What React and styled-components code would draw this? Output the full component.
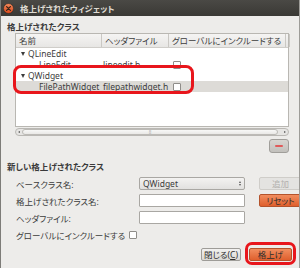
import React from 'react';
import styled, { createGlobalStyle } from 'styled-components';

const Global = createGlobalStyle`
  html, body { margin: 0; padding: 0; background: #edecea; }
  body {
    font-family: "Noto Sans", "Noto Sans CJK JP", sans-serif;
    font-feature-settings: "palt";
    font-size: 8.5px;
    color: #3c3c3c;
  }
`;

const Window = styled.div`
  width: 300px;
  height: 268px;
  box-sizing: border-box;
  border-left: 1px solid #7d7c78;
  border-right: 1px solid #9d9c98;
  background: #edecea;
  display: flex;
  flex-direction: column;
  overflow: hidden;
`;

const TitleBar = styled.div`
  height: 16px;
  flex: none;
  display: flex;
  align-items: center;
  gap: 6px;
  padding-left: 3px;
  background: linear-gradient(#4a4945, #3a3935);
  color: #dfdbd2;
  font-weight: bold;
  font-size: 8.5px;
  margin-left: -1px;
  margin-right: -1px;
`;

const Body = styled.div`
  display: flex;
  flex-direction: column;
`;

const SectionTitle = styled.div`
  font-weight: bold;
  height: 12px;
  line-height: 12px;
  margin: ${p => p.$top}px 0 0 6px;
  color: #3a3a3a;
`;

const TreeFrame = styled.div`
  position: relative;
  margin: 0 0 0 14px;
  width: 274px;
  height: 94px;
  box-sizing: border-box;
  border: 1px solid #b9b7b2;
  background: #fff;
`;

const Header = styled.div`
  display: grid;
  grid-template-columns: 86px 67px 117px 1fr;
  height: 13px;
  background: linear-gradient(#f5f4f3, #e7e6e4);
  border-bottom: 1px solid #cfcdc9;
`;

const HeadCell = styled.div`
  padding-left: 3px;
  line-height: 13px;
  white-space: nowrap;
  overflow: hidden;
  border-right: 1px solid #cac8c4;
  color: #3c3c3c;
`;

const Row = styled.div`
  display: grid;
  grid-template-columns: 86px 67px 1fr;
  height: 11px;
  line-height: 11px;
  background: ${p => (p.$selected ? '#dddbd7' : 'transparent')};
  white-space: nowrap;
`;

const NameCell = styled.div`
  padding-left: ${p => p.$indent}px;
  display: flex;
  align-items: center;
  gap: 3px;
  min-width: 0;
`;

const Arrow = styled.span`
  width: 0;
  height: 0;
  border-left: 2.5px solid transparent;
  border-right: 2.5px solid transparent;
  border-top: 4px solid #3c3c3c;
`;

const FileCell = styled.div`
  padding-left: 1px;
`;

const CheckCell = styled.div`
  display: flex;
  align-items: center;
  padding-left: 4px;
`;

const Check = styled.span`
  width: 6px;
  height: 6px;
  border: 1px solid #8f8d89;
  border-radius: 1px;
  background: #fff;
  display: inline-block;
`;

const Mark = styled.div`
  position: absolute;
  border: 3px solid #e8161c;
  border-radius: 8px;
  pointer-events: none;
`;

const Scrollbar = styled.div`
  margin: 1px 0 0 14px;
  width: 274px;
  height: 8px;
  box-sizing: border-box;
  border: 1px solid #bab8b4;
  border-radius: 4px;
  background: #e6e5e3;
  display: flex;
  align-items: center;
`;

const ScrollArrow = styled.span`
  width: 6px;
  height: 6px;
  display: flex;
  align-items: center;
  justify-content: center;
  &::after {
    content: '';
    border-top: 1.5px solid transparent;
    border-bottom: 1.5px solid transparent;
    ${p => (p.$dir === 'left' ? 'border-right: 2px solid #555;' : 'border-left: 2px solid #555;')}
  }
`;

const Thumb = styled.div`
  flex: 1;
  height: 6px;
  box-sizing: border-box;
  border: 1px solid #bcbab6;
  border-radius: 3px;
  background: linear-gradient(#f8f8f7, #e9e8e6);
  margin-right: 4px;
  display: flex;
  align-items: center;
  justify-content: center;
  color: #999;
  font-size: 5px;
  line-height: 4px;
`;

const MinusRow = styled.div`
  display: flex;
  justify-content: flex-end;
  margin: 3px 10px 0 0;
`;

const MinusButton = styled.button`
  width: 20px;
  height: 14px;
  padding: 0;
  border: 1px solid #a09e9a;
  border-radius: 3px;
  background: linear-gradient(#d7d5d1, #c2c0bc);
  display: flex;
  align-items: center;
  justify-content: center;
  &::after {
    content: '';
    width: 8px;
    height: 2px;
    border-radius: 1px;
    background: #e05a5a;
  }
`;

const Form = styled.div`
  display: grid;
  grid-template-columns: 109px 106px 43px;
  grid-auto-rows: 13px;
  column-gap: 14px;
  row-gap: 4px;
  margin: 4px 0 0 15px;
  align-items: center;
`;

const Label = styled.div`
  white-space: nowrap;
  color: #3c3c3c;
`;

const Combo = styled.div`
  height: 13px;
  box-sizing: border-box;
  border: 1px solid #a9a7a3;
  border-radius: 2px;
  background: linear-gradient(#f3f2f1, #e2e1df);
  display: flex;
  align-items: center;
  justify-content: space-between;
  padding: 0 3px 0 3px;
  line-height: 11px;
`;

const ComboArrows = styled.span`
  display: flex;
  flex-direction: column;
  gap: 1px;
  &::before, &::after {
    content: '';
    border-left: 1.5px solid transparent;
    border-right: 1.5px solid transparent;
  }
  &::before { border-bottom: 2px solid #555; }
  &::after { border-top: 2px solid #555; }
`;

const Input = styled.div`
  height: 13px;
  box-sizing: border-box;
  border: 1px solid #a9a7a3;
  border-radius: 1px;
  background: #fff;
`;

const Button = styled.button`
  height: 13px;
  width: ${p => p.$w || 43}px;
  box-sizing: border-box;
  padding: 0;
  font: inherit;
  line-height: 11px;
  border-radius: 2px;
  border: 1px solid ${p => (p.$kind === 'orange' ? '#b4532c' : p.$kind === 'disabled' ? '#cfcdc9' : '#9e9c98')};
  background: ${p =>
    p.$kind === 'orange'
      ? 'linear-gradient(#f18d5e, #df5f2d)'
      : p.$kind === 'disabled'
      ? '#e4e3e1'
      : 'linear-gradient(#f2f1f0, #d9d7d3)'};
  color: ${p => (p.$kind === 'disabled' ? '#b3b1ad' : '#2e2e2e')};
`;

const CheckRow = styled.div`
  display: flex;
  align-items: center;
  gap: 4px;
  grid-column: 1 / span 2;
`;

const Footer = styled.div`
  display: flex;
  justify-content: flex-end;
  gap: 8px;
  margin: 7px 7px 0 0;
`;

const Highlighted = styled.span`
  position: relative;
  display: inline-flex;
`;

const CloseIcon = () => (
  <svg width="11" height="11" viewBox="0 0 11 11">
    <defs>
      <linearGradient id="cg" x1="0" y1="0" x2="0" y2="1">
        <stop offset="0" stopColor="#f58a5c" />
        <stop offset="1" stopColor="#d9481a" />
      </linearGradient>
    </defs>
    <circle cx="5.5" cy="5.5" r="5" fill="url(#cg)" stroke="#2a2926" strokeWidth="0.6" />
    <path d="M3.6 3.6 L7.4 7.4 M7.4 3.6 L3.6 7.4" stroke="#3a2418" strokeWidth="1.3" strokeLinecap="round" />
  </svg>
);

const rows = [
  { name: 'QLineEdit', group: true },
  { name: 'LineEdit', file: 'lineedit.h' },
  { name: 'QWidget', group: true },
  { name: 'FilePathWidget', file: 'filepathwidget.h', selected: true },
];

export default function App() {
  return (
    <>
      <Global />
      <Window>
        <TitleBar>
          <CloseIcon />
          <span>格上げされたウィジェット</span>
        </TitleBar>
        <Body>
          <SectionTitle $top={5}>格上げされたクラス</SectionTitle>
          <TreeFrame>
            <Header>
              <HeadCell>名前</HeadCell>
              <HeadCell>ヘッダファイル</HeadCell>
              <HeadCell>グローバルにインクルードする</HeadCell>
              <HeadCell />
            </Header>
            {rows.map(r =>
              r.group ? (
                <Row key={r.name}>
                  <NameCell $indent={5}>
                    <Arrow />
                    {r.name}
                  </NameCell>
                </Row>
              ) : (
                <Row key={r.name} $selected={r.selected}>
                  <NameCell $indent={23}>{r.name}</NameCell>
                  <FileCell>{r.file}</FileCell>
                  <CheckCell>
                    <Check />
                  </CheckCell>
                </Row>
              )
            )}
            <Mark style={{ left: -3, top: 31, width: 181, height: 29, boxSizing: 'border-box' }} />
          </TreeFrame>
          <Scrollbar>
            <ScrollArrow $dir="left" />
            <Thumb>⁞⁞</Thumb>
            <ScrollArrow $dir="right" />
          </Scrollbar>
          <MinusRow>
            <MinusButton />
          </MinusRow>
          <SectionTitle $top={8}>新しい格上げされたクラス</SectionTitle>
          <Form>
            <Label>ベースクラス名:</Label>
            <Combo>
              QWidget
              <ComboArrows />
            </Combo>
            <Button $kind="disabled">追加</Button>
            <Label>格上げされたクラス名:</Label>
            <Input />
            <Button $kind="orange">リセット</Button>
            <Label>ヘッダファイル:</Label>
            <Input />
            <span />
            <CheckRow>
              <Label>グローバルにインクルードする</Label>
              <Check />
            </CheckRow>
          </Form>
          <Footer>
            <Button $w={40}>閉じる(<u>C</u>)</Button>
            <Highlighted>
              <Button $kind="orange">格上げ</Button>
              <Mark style={{ left: -4, top: -6, right: -4, bottom: -4, borderRadius: 7 }} />
            </Highlighted>
          </Footer>
        </Body>
      </Window>
    </>
  );
}
